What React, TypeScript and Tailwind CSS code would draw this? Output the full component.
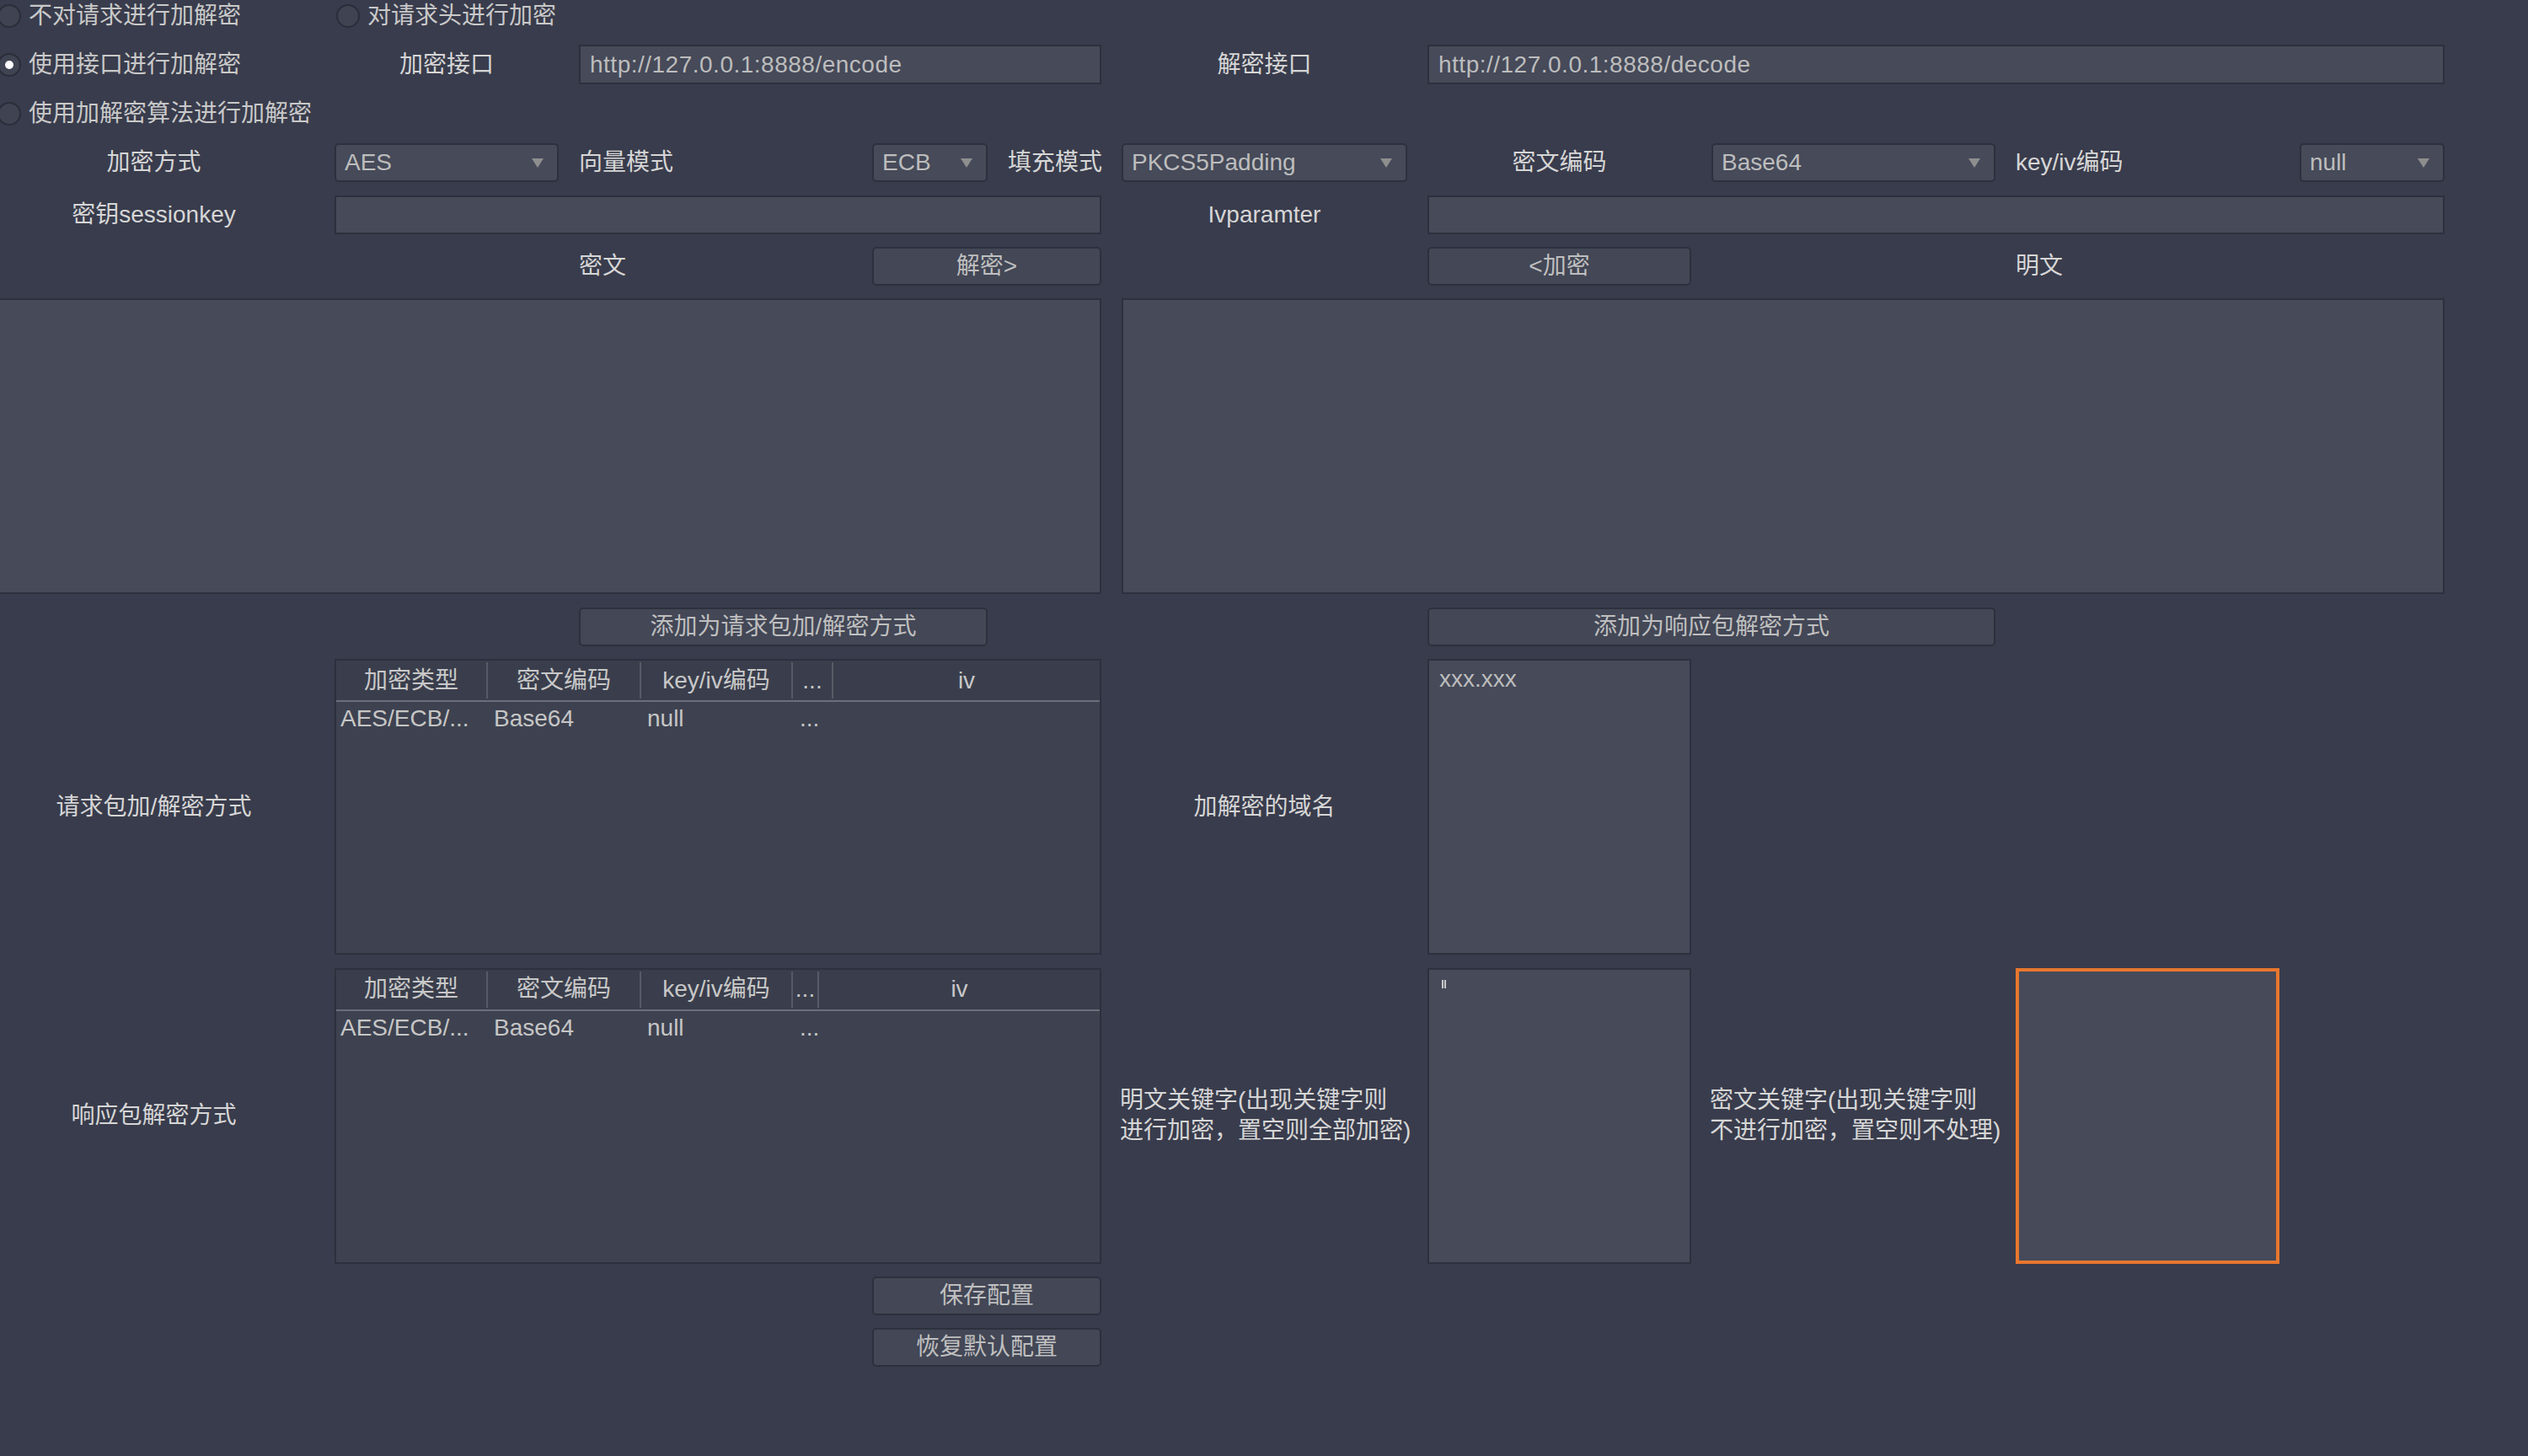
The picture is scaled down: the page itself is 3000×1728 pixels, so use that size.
import React from "react";

const field = "bg-[#464a59] border-2 border-[#2d303d]";

const Radio = ({ checked, label }: { checked?: boolean; label: string }) => (
  <div className="flex items-center gap-[9px] pl-[5px] text-[#c9c9c9]">
    <span className="flex h-[28px] w-[28px] shrink-0 items-center justify-center rounded-full border-2 border-[#2b2e3a] bg-[#3f4352]">
      {checked && <span className="h-[10px] w-[10px] rounded-full bg-white" />}
    </span>
    <span className="whitespace-nowrap">{label}</span>
  </div>
);

const Caret = () => (
  <svg width="14" height="11" viewBox="0 0 14 11" className="shrink-0">
    <polygon points="0,0 14,0 7,11" fill="#8e8e8e" />
  </svg>
);

const Select = ({ value, className = "" }: { value: string; className?: string }) => (
  <div
    className={`flex items-center justify-between rounded-[5px] pl-[10px] pr-[16px] text-[#bdbdbd] ${field} ${className}`}
  >
    <span>{value}</span>
    <Caret />
  </div>
);

const Input = ({ value = "", className = "" }: { value?: string; className?: string }) => (
  <div className={`flex items-center pl-[11px] tracking-[0.5px] text-[#bdbdbd] ${field} ${className}`}>{value}</div>
);

const Button = ({ label, className = "" }: { label: string; className?: string }) => (
  <div
    className={`flex items-center justify-center rounded-[5px] border-2 border-[#2d303d] bg-[#434756] text-[#bfbfbf] ${className}`}
  >
    {label}
  </div>
);

const Table = ({ dotsWidth, className = "" }: { dotsWidth: string; className?: string }) => (
  <div className={`flex flex-col border-2 border-[#2d303d] bg-[#3e4250] ${className}`}>
    <div className="flex h-[49px] shrink-0 items-center border-b-2 border-[#6b6f79] bg-[#3a3e4c] text-[#c8c8c8]">
      <div className="flex h-[43px] w-[180px] items-center justify-center border-r-2 border-[#575b67]">加密类型</div>
      <div className="flex h-[43px] w-[182px] items-center justify-center border-r-2 border-[#575b67]">密文编码</div>
      <div className="flex h-[43px] w-[180px] items-center justify-center border-r-2 border-[#575b67]">key/iv编码</div>
      <div className={`flex h-[43px] items-center justify-center border-r-2 border-[#575b67] ${dotsWidth}`}>...</div>
      <div className="flex h-[43px] flex-1 items-center justify-center">iv</div>
    </div>
    <div className="flex h-[40px] items-center text-[#c6c6c6]">
      <div className="w-[180px] pl-[5px] whitespace-nowrap">AES/ECB/...</div>
      <div className="w-[182px] pl-[7px]">Base64</div>
      <div className="w-[180px] pl-[7px]">null</div>
      <div className="pl-[8px]">...</div>
    </div>
  </div>
);

export default function App() {
  return (
    <div className="h-[1728px] w-[3000px] overflow-hidden bg-[#393c4c] text-[28px] text-[#d6d6d6] font-['Liberation_Sans','Noto_Sans_CJK_SC',sans-serif]">
      <div className="-ml-2 -mt-[1px] grid grid-cols-[381px_266px_324px_137px_111px_339px_313px_337px_313px_172px] grid-rows-[39px_47px_39px_46px_46px_46px_351px_46px_351px_351px_46px_46px] gap-x-6 gap-y-[15.4px]">
        {/* row 1 */}
        <div className="col-start-1 row-start-1 flex items-center">
          <Radio label="不对请求进行加解密" />
        </div>
        <div className="col-start-2 col-span-2 row-start-1 flex items-center -ml-[3px]">
          <Radio label="对请求头进行加密" />
        </div>

        {/* row 2 */}
        <div className="col-start-1 row-start-2 flex items-center">
          <Radio checked label="使用接口进行加解密" />
        </div>
        <div className="col-start-2 row-start-2 flex items-center justify-center">加密接口</div>
        <Input className="col-start-3 col-span-3 row-start-2" value="http://127.0.0.1:8888/encode" />
        <div className="col-start-6 row-start-2 flex items-center justify-center">解密接口</div>
        <Input className="col-start-7 col-span-4 row-start-2" value="http://127.0.0.1:8888/decode" />

        {/* row 3 */}
        <div className="col-start-1 col-span-2 row-start-3 flex items-center">
          <Radio label="使用加解密算法进行加解密" />
        </div>

        {/* row 4 */}
        <div className="col-start-1 row-start-4 flex items-center justify-center">加密方式</div>
        <Select className="col-start-2 row-start-4" value="AES" />
        <div className="col-start-3 row-start-4 flex items-center">向量模式</div>
        <Select className="col-start-4 row-start-4" value="ECB" />
        <div className="col-start-5 row-start-4 flex items-center whitespace-nowrap">填充模式</div>
        <Select className="col-start-6 row-start-4" value="PKCS5Padding" />
        <div className="col-start-7 row-start-4 flex items-center justify-center">密文编码</div>
        <Select className="col-start-8 row-start-4" value="Base64" />
        <div className="col-start-9 row-start-4 flex items-center">key/iv编码</div>
        <Select className="col-start-10 row-start-4" value="null" />

        {/* row 5 */}
        <div className="col-start-1 row-start-5 flex items-center justify-center">密钥sessionkey</div>
        <Input className="col-start-2 col-span-4 row-start-5" />
        <div className="col-start-6 row-start-5 flex items-center justify-center">Ivparamter</div>
        <Input className="col-start-7 col-span-4 row-start-5" />

        {/* row 6 */}
        <div className="col-start-3 row-start-6 flex items-center">密文</div>
        <Button className="col-start-4 col-span-2 row-start-6" label="解密>" />
        <Button className="col-start-7 row-start-6" label="<加密" />
        <div className="col-start-9 row-start-6 flex items-center">明文</div>

        {/* row 7 */}
        <div className={`col-start-1 col-span-5 row-start-7 ${field}`} />
        <div className={`col-start-6 col-span-5 row-start-7 ${field}`} />

        {/* row 8 */}
        <Button className="col-start-3 col-span-2 row-start-8" label="添加为请求包加/解密方式" />
        <Button className="col-start-7 col-span-2 row-start-8" label="添加为响应包解密方式" />

        {/* row 9 */}
        <div className="col-start-1 row-start-9 flex items-center justify-center">请求包加/解密方式</div>
        <Table className="col-start-2 col-span-4 row-start-9" dotsWidth="w-[48px]" />
        <div className="col-start-6 row-start-9 flex items-center justify-center">加解密的域名</div>
        <div className={`col-start-7 row-start-9 pl-[12px] pt-[1px] text-[#bdbdbd] ${field}`}>xxx.xxx</div>

        {/* row 10 */}
        <div className="col-start-1 row-start-10 flex items-center justify-center">响应包解密方式</div>
        <Table className="col-start-2 col-span-4 row-start-10" dotsWidth="w-[31px]" />
        <div className="col-start-6 row-start-10 -ml-[2px] flex flex-col justify-center whitespace-nowrap leading-[36px]">
          <span>明文关键字(出现关键字则</span>
          <span>进行加密，置空则全部加密)</span>
        </div>
        <div className={`col-start-7 row-start-10 pl-[15px] pt-[12px] ${field}`}>
          <div className="h-[10px] w-[5px] border-x-2 border-[#c8c8c8]" />
        </div>
        <div className="col-start-8 row-start-10 -ml-[2px] flex flex-col justify-center whitespace-nowrap leading-[36px]">
          <span>密文关键字(出现关键字则</span>
          <span>不进行加密，置空则不处理)</span>
        </div>
        <div className="col-start-9 row-start-10 border-4 border-[#e8772e] bg-[#464a59]" />

        {/* row 11, 12 */}
        <Button className="col-start-4 col-span-2 row-start-11" label="保存配置" />
        <Button className="col-start-4 col-span-2 row-start-12" label="恢复默认配置" />
      </div>
    </div>
  );
}
